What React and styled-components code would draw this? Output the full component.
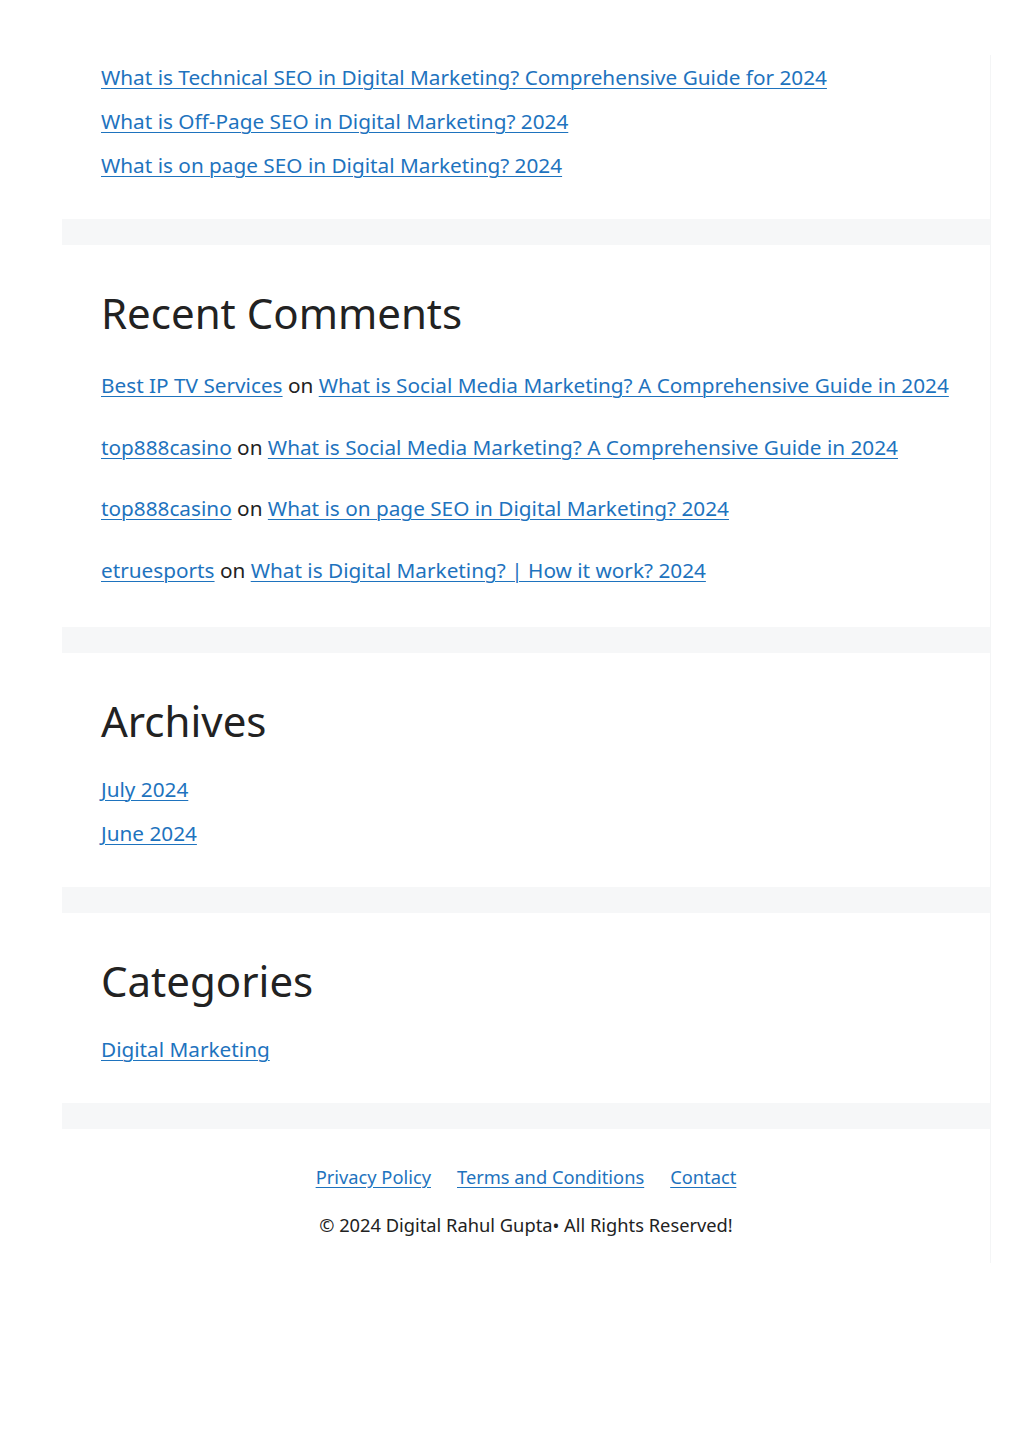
import React from 'react';
import styled, { createGlobalStyle } from 'styled-components';

const GlobalStyle = createGlobalStyle`
   body {
      margin: 0;
      background: #ffffff;
      font-family: "Noto Sans", "Open Sans", sans-serif;
      color: #222222;
   }
`

const Page = styled.div`
   margin: 0 33px 0 62px;
   padding-top: 55px;
   padding-bottom: 186px;
`

const Container = styled.div`
   border-right: 1px solid #f4f5f6;
   background: #ffffff;
`

const Widget = styled.section`
   padding: ${props => props.first ? '0' : '43px'} 39px ${props => props.bottom || 32}px;
`

const Separator = styled.div`
   height: 26px;
   background: #f6f7f8;
`

const Title = styled.h2`
   margin: 0 0 ${props => props.space || 21}px;
   font-size: 42px;
   font-weight: 400;
   line-height: 50px;
   color: #222222;
`

const List = styled.ul`
   list-style: none;
   margin: 0;
   padding: 0;
   display: flex;
   flex-direction: column;
   gap: ${props => props.gap || 0}px;
`

const Item = styled.li`
   font-size: 20.75px;
   line-height: 44px;
   white-space: nowrap;
`

const Link = styled.a`
   color: #1e73be;
   text-decoration: underline;
   text-underline-offset: 3px;
   text-decoration-thickness: 1px;
`

const Footer = styled.footer`
   padding: 35px 0 25px;
   display: flex;
   flex-direction: column;
   align-items: center;
   gap: 22px;
   font-size: 18.3px;
`

const FooterLinks = styled.nav`
   display: flex;
   gap: 26px;
   line-height: 26px;
`

const Copyright = styled.div`
   line-height: 26px;
`

const recentPosts = [
   'What is Technical SEO in Digital Marketing? Comprehensive Guide for 2024',
   'What is Off-Page SEO in Digital Marketing? 2024',
   'What is on page SEO in Digital Marketing? 2024',
];

const comments = [
   { author: 'Best IP TV Services', post: 'What is Social Media Marketing? A Comprehensive Guide in 2024' },
   { author: 'top888casino', post: 'What is Social Media Marketing? A Comprehensive Guide in 2024' },
   { author: 'top888casino', post: 'What is on page SEO in Digital Marketing? 2024' },
   { author: 'etruesports', post: 'What is Digital Marketing? | How it work? 2024' },
];

const App = () => {
   return (
      <Page>
         <GlobalStyle />
         <Container>
            <Widget first>
               <List>
                  {recentPosts.map(p => (
                     <Item key={p}><Link href="#">{p}</Link></Item>
                  ))}
               </List>
            </Widget>
            <Separator />
            <Widget bottom={35}>
               <Title space={25}>Recent Comments</Title>
               <List gap={17.5}>
                  {comments.map((c, i) => (
                     <Item key={i}><Link href="#">{c.author}</Link> on <Link href="#">{c.post}</Link></Item>
                  ))}
               </List>
            </Widget>
            <Separator />
            <Widget>
               <Title>Archives</Title>
               <List>
                  <Item><Link href="#">July 2024</Link></Item>
                  <Item><Link href="#">June 2024</Link></Item>
               </List>
            </Widget>
            <Separator />
            <Widget>
               <Title>Categories</Title>
               <List>
                  <Item><Link href="#">Digital Marketing</Link></Item>
               </List>
            </Widget>
            <Separator />
            <Footer>
               <FooterLinks>
                  <Link href="#">Privacy Policy</Link>
                  <Link href="#">Terms and Conditions</Link>
                  <Link href="#">Contact</Link>
               </FooterLinks>
               <Copyright>© 2024 Digital Rahul Gupta• All Rights Reserved!</Copyright>
            </Footer>
         </Container>
      </Page>
   );
}

export default App;
